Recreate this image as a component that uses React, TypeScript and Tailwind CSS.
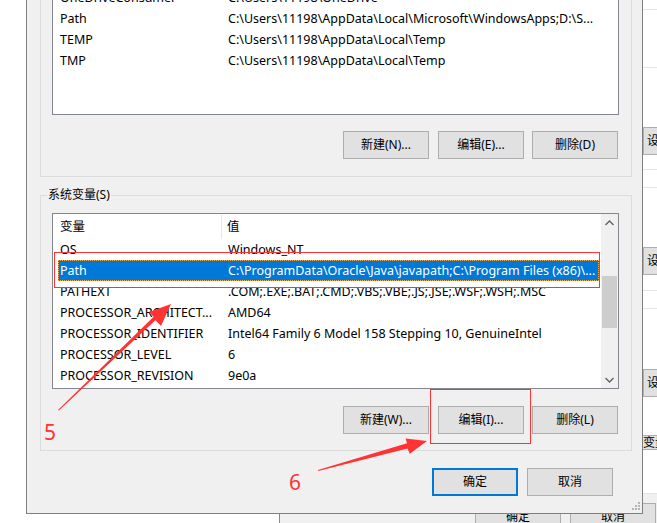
import React from 'react';

const userVars: [string, string][] = [
  ['OneDriveConsumer', 'C:\\Users\\11198\\OneDrive'],
  ['Path', 'C:\\Users\\11198\\AppData\\Local\\Microsoft\\WindowsApps;D:\\S...'],
  ['TEMP', 'C:\\Users\\11198\\AppData\\Local\\Temp'],
  ['TMP', 'C:\\Users\\11198\\AppData\\Local\\Temp'],
];

const sysVars: [string, string][] = [
  ['OS', 'Windows_NT'],
  ['Path', 'C:\\ProgramData\\Oracle\\Java\\javapath;C:\\Program Files (x86)\\...'],
  ['PATHEXT', '.COM;.EXE;.BAT;.CMD;.VBS;.VBE;.JS;.JSE;.WSF;.WSH;.MSC'],
  ['PROCESSOR_ARCHITECT...', 'AMD64'],
  ['PROCESSOR_IDENTIFIER', 'Intel64 Family 6 Model 158 Stepping 10, GenuineIntel'],
  ['PROCESSOR_LEVEL', '6'],
  ['PROCESSOR_REVISION', '9e0a'],
];

function WinButton({ label, primary, className = '' }: { label: string; primary?: boolean; className?: string }) {
  return (
    <div
      className={`flex h-[28px] w-[86px] shrink-0 items-center justify-center bg-[#e1e1e1] text-[12px] text-black ${
        primary ? 'border-2 border-[#0078d7]' : 'border border-[#adadad]'
      } ${className}`}
    >
      {label}
    </div>
  );
}

function Row({ name, value, selected }: { name: string; value: string; selected?: boolean }) {
  if (selected) {
    return (
      <div className="flex h-[21px] items-stretch">
        <div className="ml-[5px] flex w-[541px] items-center overflow-hidden border border-dotted border-[#f2b05a] bg-[#0078d7] pt-px text-white">
          <div className="w-[169px] shrink-0 truncate pl-[1px]">{name}</div>
          <div className="whitespace-nowrap">{value}</div>
        </div>
      </div>
    );
  }
  return (
    <div className="flex h-[21px] items-center pt-px">
      <div className="w-[175px] shrink-0 whitespace-nowrap pl-[7px]">{name}</div>
      <div className="whitespace-nowrap">{value}</div>
    </div>
  );
}

function Chevron({ up }: { up?: boolean }) {
  return (
    <svg width="9" height="6" viewBox="0 0 9 6">
      <polyline
        points={up ? '0.5,5 4.5,1 8.5,5' : '0.5,1 4.5,5 8.5,1'}
        fill="none"
        stroke="#606060"
        strokeWidth="1.3"
      />
    </svg>
  );
}

function GroupBox({ label, children, className = '' }: { label?: string; children: React.ReactNode; className?: string }) {
  return (
    <div className={`relative w-[592px] border border-[#dcdcdc] pl-[11px] pr-[12px] ${className}`}>
      {label && (
        <span className="absolute left-[6px] top-[-9px] bg-[#f0f0f0] px-[1px] text-[12px] leading-[16px]">{label}</span>
      )}
      {children}
    </div>
  );
}

function BackStripButton({ label }: { label: string }) {
  return (
    <div className="flex h-[28px] items-center overflow-hidden whitespace-nowrap border border-[#adadad] bg-[#e1e1e1] pl-[3px] text-[12px]">
      {label}
    </div>
  );
}

export default function App() {
  return (
    <div className="relative h-[523px] w-[657px] overflow-hidden bg-white font-[family-name:'Noto_Sans','Noto_Sans_CJK_SC',sans-serif] text-[12px] text-black">
      {/* window behind the dialog */}
      <div className="absolute left-[279px] top-0 flex h-[560px] w-[420px] flex-col border-l border-[#8a8a8a] bg-[#f0f0f0]">
        <div className="h-[494px] border-b border-[#e3e3e3]">
          <div className="ml-[363px] flex h-full w-[60px] flex-col bg-white">
            <div className="h-[10px] border-b border-[#e5e5e5]" />
            <div className="h-[58px] border-b border-[#e5e5e5]" />
            <div className="h-[59px]" />
            <BackStripButton label="设" />
            <div className="h-[15px] border-b border-[#e5e5e5]" />
            <div className="h-[18px] border-b border-[#e5e5e5]" />
            <div className="h-[59px]" />
            <BackStripButton label="设" />
            <div className="h-[16px] border-b border-[#e5e5e5]" />
            <div className="h-[18px] border-b border-[#e5e5e5]" />
            <div className="h-[60px]" />
            <BackStripButton label="设" />
            <div className="h-[38px]" />
            <div className="flex h-[15px] items-center overflow-hidden whitespace-nowrap border-y border-[#adadad] bg-[#e1e1e1] text-[12px] leading-none">
              变量
            </div>
          </div>
        </div>
        <div className="mt-[9px] flex pl-[195px]">
          <WinButton label="确定" className="mr-[9px]" />
          <WinButton label="取消" />
        </div>
      </div>

      {/* environment variables dialog */}
      <div className="absolute left-[26px] top-[-20px] flex h-[534px] w-[617px] flex-col border border-[#7f7f7f] bg-[#f0f0f0] pl-[13px]">
        <GroupBox className="mt-[4px]">
          <div className="h-[129px] overflow-hidden border border-[#828790] bg-white text-[12.5px]">
            {userVars.map(([n, v]) => (
              <Row key={n} name={n} value={v} />
            ))}
          </div>
          <div className="mt-[16px] mb-[17px] flex justify-end pr-[1px]">
            <WinButton label="新建(N)..." className="mr-[9px]" />
            <WinButton label="编辑(E)..." className="mr-[8px]" />
            <WinButton label="删除(D)" />
          </div>
        </GroupBox>

        <GroupBox label="系统变量(S)" className="mt-[18px] pt-[17px]">
          <div className="flex h-[176px] border border-[#828790] bg-white text-[12.5px]">
            <div className="min-w-0 flex-1 overflow-hidden">
              <div className="flex h-[25px] items-center pt-px">
                <div className="flex h-full w-[169px] shrink-0 items-center border-r border-[#e5e5e5] pl-[7px]">变量</div>
                <div className="pl-[5px]">值</div>
              </div>
              {sysVars.map(([n, v]) => (
                <Row key={n} name={n} value={v} selected={n === 'Path'} />
              ))}
            </div>
            <div className="flex w-[17px] shrink-0 flex-col bg-[#f0f0f0]">
              <div className="flex h-[17px] items-center justify-center">
                <Chevron up />
              </div>
              <div className="flex-1">
                <div className="mx-[1px] mt-[45px] h-[52px] bg-[#cdcdcd]" />
              </div>
              <div className="flex h-[17px] items-center justify-center">
                <Chevron />
              </div>
            </div>
          </div>
          <div className="mt-[17px] mb-[16px] flex justify-end pr-[1px]">
            <WinButton label="新建(W)..." className="mr-[9px]" />
            <WinButton label="编辑(I)..." className="mr-[8px]" />
            <WinButton label="删除(L)" />
          </div>
        </GroupBox>

        <div className="mt-[17px] flex justify-end pr-[29px]">
          <WinButton label="确定" primary className="mr-[9px]" />
          <WinButton label="取消" />
        </div>

        {/* resize grip */}
        <svg className="absolute bottom-[2px] right-[2px]" width="10" height="10" viewBox="0 0 10 10">
          {[
            [8, 0],
            [5, 3],
            [8, 3],
            [2, 6],
            [5, 6],
            [8, 6],
          ].map(([x, y]) => (
            <rect key={`${x}-${y}`} x={x} y={y + 1} width="2" height="2" fill="#b5b5b5" />
          ))}
        </svg>
      </div>

      {/* annotations */}
      <div className="pointer-events-none absolute left-[54px] top-[252px] h-[36px] w-[546px] border border-[#ff3333]" />
      <div className="pointer-events-none absolute left-[430px] top-[389px] h-[55px] w-[101px] border border-[#ff3333]" />
      <svg className="pointer-events-none absolute left-0 top-0" width="657" height="523" viewBox="0 0 657 523">
        <polygon
          points="58,410 58.9,410.4 155.4,320.3 161,326 171,304 149,312 153.6,316.7"
          fill="#ff3333"
        />
        <polygon
          points="318,470 318.2,470.9 407.5,448.6 409.8,453.8 427,441 405.6,438.4 407,443.2"
          fill="#ff3333"
        />
      </svg>
      <span className="absolute left-[44px] top-[419px] text-[21px] leading-[26px] text-[#ff3333]">5</span>
      <span className="absolute left-[289px] top-[469px] text-[21px] leading-[26px] text-[#ff3333]">6</span>
    </div>
  );
}
